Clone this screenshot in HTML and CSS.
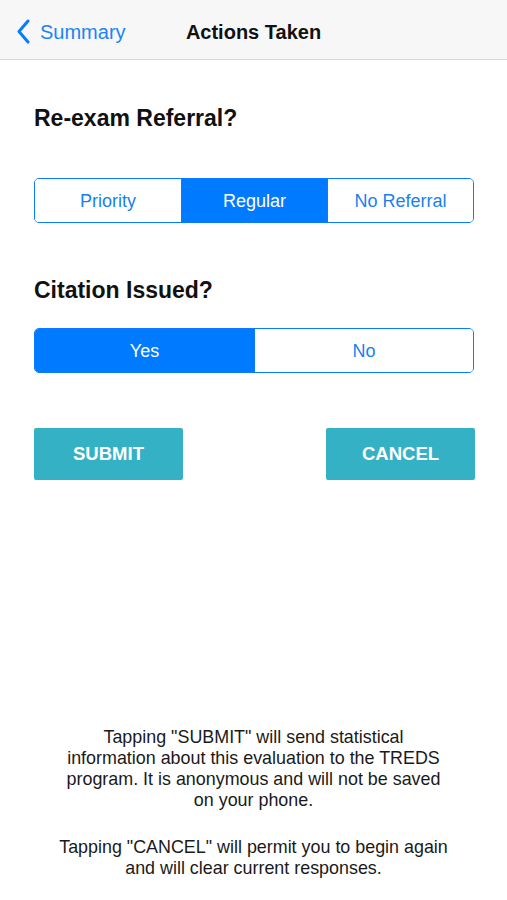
FILE: index.html
```html
<!DOCTYPE html>
<html lang="en">
<head>
    <meta charset="UTF-8">
    <meta name="viewport" content="width=device-width, initial-scale=1.0">
    <title>Actions Taken</title>
    <link rel="stylesheet" href="styles.css">
</head>
<body>

    <div class="nav-bar">
        <a href="#" class="back-link">
            <svg class="chevron" width="14" height="25" viewBox="0 0 14 25">
                <path d="M12 2 L3 12.5 L12 23" fill="none" stroke="#0a7aff" stroke-width="3" stroke-linecap="round" stroke-linejoin="round"/>
            </svg>
            <span>Summary</span>
        </a>
        <h1 class="nav-title">Actions Taken</h1>
        <div></div>
    </div>

    <div class="content">
        <h2 class="question first">Re-exam Referral?</h2>
        <div class="segmented thirds">
            <button type="button" class="segment">Priority</button>
            <button type="button" class="segment selected">Regular</button>
            <button type="button" class="segment">No Referral</button>
        </div>

        <h2 class="question">Citation Issued?</h2>
        <div class="segmented halves">
            <button type="button" class="segment selected">Yes</button>
            <button type="button" class="segment">No</button>
        </div>

        <div class="actions">
            <button type="button" class="action-button">SUBMIT</button>
            <button type="button" class="action-button">CANCEL</button>
        </div>
    </div>

    <div class="notes">
        <p>Tapping "SUBMIT" will send statistical information about this evaluation to the TREDS program. It is anonymous and will not be saved on your phone.</p>
        <p>Tapping "CANCEL" will permit you to begin again and will clear current responses.</p>
    </div>

</body>
</html>
```

FILE: styles.css
```css
body {
    margin: 0;
    font-family: "Liberation Sans", Arial, sans-serif;
    background-color: #fff;
    color: #111;
}

.nav-bar {
    display: grid;
    grid-template-columns: 1fr auto 1fr;
    align-items: center;
    height: 59px;
    padding: 0 0 0 16px;
    background-color: #f7f7f7;
    border-bottom: 1px solid #d8d8d8;
    box-sizing: content-box;
}

.back-link {
    display: flex;
    align-items: center;
    gap: 10px;
    color: #1a86f5;
    font-size: 20px;
    text-decoration: none;
    margin-top: 6px;
}

.chevron {
    margin-top: -3px;
}

.nav-title {
    margin: 6px 0 0 0;
    font-size: 20px;
    font-weight: bold;
    color: #111;
    transform: translateX(-8px);
}

.content {
    padding: 0 33px 0 34px;
}

.question {
    margin: 0;
    font-size: 23px;
    line-height: 28px;
    font-weight: bold;
    color: #111;
}

.question.first {
    margin-top: 44px;
}

.segmented {
    display: grid;
    margin: 46px 0 53px;
    border: 1px solid #0a7aff;
    border-radius: 5px;
    overflow: hidden;
    height: 43px;
}

.segmented.thirds {
    grid-template-columns: 1fr 1fr 1fr;
}

.segmented.halves {
    grid-template-columns: 1fr 1fr;
    margin: 24px 0 55px;
}

.segment {
    border: none;
    border-left: 1px solid #0a7aff;
    background-color: #fff;
    color: #1a7ff0;
    font-family: "Liberation Sans", Arial, sans-serif;
    font-size: 18px;
    padding: 2px 0 0 0;
    cursor: pointer;
}

.segment:first-child {
    border-left: none;
}

.segment.selected {
    background-color: #007aff;
    color: #fff;
}

.actions {
    display: flex;
    justify-content: space-between;
}

.action-button {
    width: 149px;
    height: 52px;
    border: none;
    border-radius: 2px;
    background-color: #35b1c5;
    color: #fff;
    font-family: "Liberation Sans", Arial, sans-serif;
    font-size: 18.5px;
    font-weight: bold;
    cursor: pointer;
    margin-right: -1px;
}

.notes {
    margin-top: 247px;
    padding: 0 57.5px;
    text-align: center;
    font-size: 17.9px;
    line-height: 21px;
    color: #1a1a1a;
}

.notes p {
    margin: 0 0 26px 0;
}
```
